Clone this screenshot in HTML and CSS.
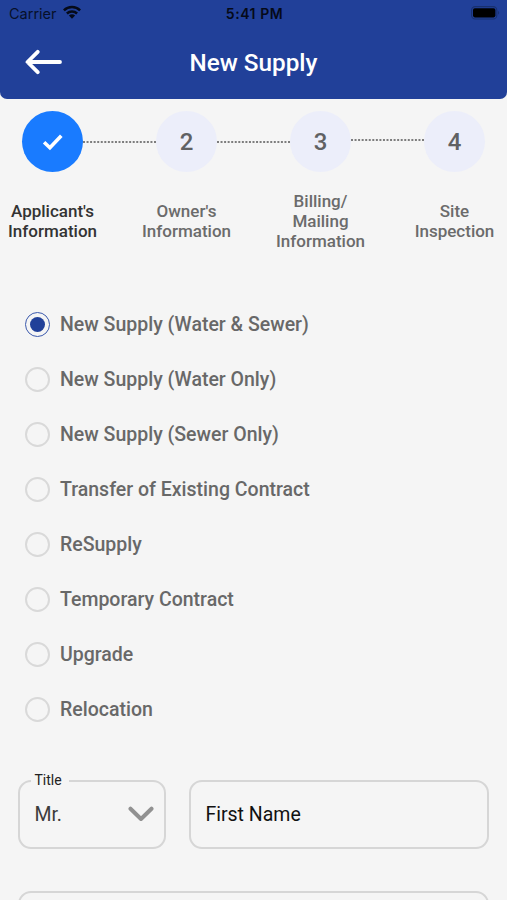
FILE: index.html
```html
<!DOCTYPE html>
<html lang="en">
<head>
<meta charset="utf-8">
<title>New Supply</title>
<link rel="stylesheet" href="styles.css">
</head>
<body>
<div class="screen">
  <header class="header">
    <div class="status">
      <div class="carrier"><span>Carrier</span>
        <svg class="wifi" width="18" height="14" viewBox="0 0 18 14"><g fill="none" stroke="#050a18" stroke-width="2.5"><path d="M.9 5.4a11.6 11.6 0 0 1 16.2 0"/><path d="M3.9 8.5a7.4 7.4 0 0 1 10.2 0"/></g><path d="M5.9 10.6a4.5 4.5 0 0 1 6.2 0L9 13.7z" fill="#050a18"/></svg>
      </div>
      <span class="time">5:41 PM</span>
      <svg class="battery" width="29" height="14" viewBox="0 0 29 14"><rect x=".6" y=".6" width="25.2" height="12.4" rx="3.6" fill="none" stroke="#18306f" stroke-width="1.1"/><rect x="2" y="2.2" width="22.4" height="9.2" rx="1.8" fill="#000"/><path d="M27.2 4.8q2 2 0 4z" fill="#18306f"/></svg>
    </div>
    <div class="bar">
      <svg class="back" width="38" height="26" viewBox="0 0 38 26"><path d="M12.7 2.8 2.5 13l10.2 10.2M2.8 13H35" fill="none" stroke="#fff" stroke-width="3.8" stroke-linecap="round" stroke-linejoin="round"/></svg>
      <h1>New Supply</h1>
    </div>
  </header>
  <div class="track">
    <div class="circle active"><svg width="22" height="18" viewBox="0 0 22 18"><path d="M2.1 9.3 7.9 14.7 19.3 2.7" fill="none" stroke="#fff" stroke-width="3.6"/></svg></div>
    <svg class="dots" height="2"><path d="M0 1H73"/></svg>
    <div class="circle">2</div>
    <svg class="dots" height="2"><path d="M0 1H73"/></svg>
    <div class="circle">3</div>
    <svg class="dots raised" height="2"><path d="M0 1H73"/></svg>
    <div class="circle">4</div>
  </div>
  <div class="labels">
    <div class="label current">Applicant's<br>Information</div>
    <div class="label">Owner's<br>Information</div>
    <div class="label">Billing/<br>Mailing<br>Information</div>
    <div class="label">Site<br>Inspection</div>
  </div>
  <ul class="options">
    <li><i class="radio checked"></i><span>New Supply (Water &amp; Sewer)</span></li>
    <li><i class="radio"></i><span>New Supply (Water Only)</span></li>
    <li><i class="radio"></i><span>New Supply (Sewer Only)</span></li>
    <li><i class="radio"></i><span>Transfer of Existing Contract</span></li>
    <li><i class="radio"></i><span>ReSupply</span></li>
    <li><i class="radio"></i><span>Temporary Contract</span></li>
    <li><i class="radio"></i><span>Upgrade</span></li>
    <li><i class="radio"></i><span>Relocation</span></li>
  </ul>
  <div class="form">
    <div class="field select"><span class="caption">Title</span><span class="value">Mr.</span>
      <svg width="26" height="16" viewBox="0 0 26 16"><path d="M2.5 2.7 13 13 23.5 2.7" fill="none" stroke="#919191" stroke-width="4" stroke-linecap="round" stroke-linejoin="round"/></svg>
    </div>
    <div class="field"><span>First Name</span></div>
    <div class="field wide"></div>
  </div>
</div>
</body>
</html>
```

FILE: styles.css
```css
* { box-sizing: border-box; }
body { margin: 0; background: #f5f5f5; font-family: Roboto, sans-serif; }
.screen { width: 507px; height: 900px; overflow: hidden; }
.header { height: 98.5px; background: #214099; border-radius: 0 0 7px 7px; }
.status { height: 28px; padding: 0 7px 0 9px; display: grid; grid-template-columns: 1fr auto 1fr; align-items: center; font: 14.5px Inter, sans-serif; color: #07102a; }
.carrier { display: flex; align-items: center; gap: 6px; margin-top: -2px; }
.wifi { margin-top: -2px; }
.time { font-weight: 600; font-size: 14px; letter-spacing: .55px; margin-top: -2px; color: #050a18; }
.battery { justify-self: end; margin-top: -2px; }
.bar { height: 69px; display: grid; grid-template-columns: 38px 1fr 38px; padding: 0 25px; align-items: center; }
h1 { margin: 0; text-align: center; color: #fff; font-size: 24.3px; font-weight: 500; line-height: 28px; }
.back { margin-top: -1px; }
.track { display: flex; align-items: center; margin: 12.5px 0 0 22px; width: 463px; }
.circle { width: 61px; height: 61px; flex: none; border-radius: 50%; background: #eceefa; display: flex; align-items: center; justify-content: center; font-size: 24px; font-weight: 500; color: #606163; }
.circle.active { background: #197bff; }
.dots { flex: 1; width: 73px; min-width: 0; stroke: #555; stroke-width: 1.7; stroke-dasharray: 2 1.55; }
.raised { margin-bottom: 4px; }
.labels { display: grid; grid-template-columns: repeat(4, 134px); height: 60px; margin: 19px 0 0 -14.5px; align-items: center; }
.label { text-align: center; font-size: 17px; line-height: 20px; font-weight: 500; color: #6b6b6b; }
.label.current { color: #333; }
.options { list-style: none; margin: 46px 0 0; padding: 0 25px; }
.options li { display: flex; align-items: center; gap: 10px; height: 55px; font-size: 19.5px; font-weight: 500; color: #686868; }
.options span { margin-top: -1px; }
.radio { width: 25px; height: 25px; border: 2px solid #d9d9d9; border-radius: 50%; display: flex; align-items: center; justify-content: center; }
.checked { border: 1.5px solid #3c5aad; }
.checked::after { content: ""; width: 15px; height: 15px; border-radius: 50%; background: #214099; }
.form { display: grid; grid-template-columns: 148px 300px; gap: 42px 23px; margin: 42.5px 0 0 18.4px; }
.field { position: relative; height: 69px; border: 2px solid #d6d6d6; border-radius: 13px; padding: 0 14px; display: flex; align-items: center; justify-content: space-between; font-size: 19.5px; color: #111; }
.wide { grid-column: 1 / 3; }
.value { color: #3c3c3c; }
.select { padding-right: 10px; }
.caption { position: absolute; left: 11px; top: -10px; padding: 0 7px 0 3px; background: #f5f5f5; font-size: 14px; line-height: 17px; color: #222; }
```
